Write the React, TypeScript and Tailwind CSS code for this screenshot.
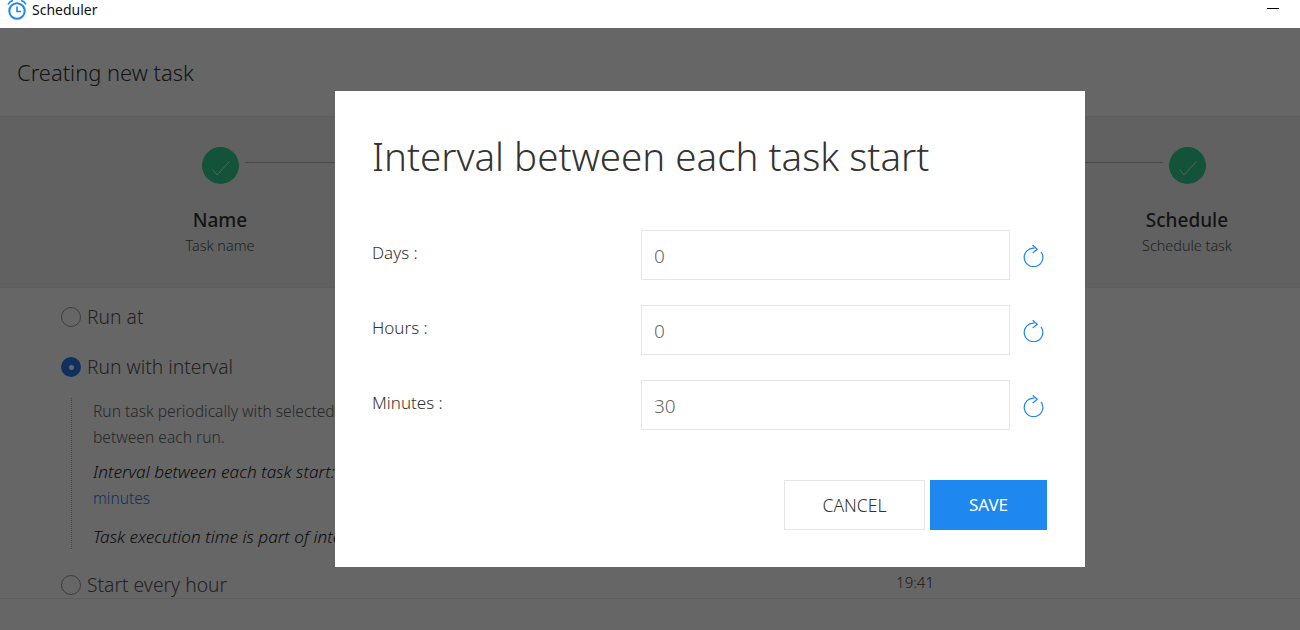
import { ReactNode } from "react";

const font = { fontFamily: '"Noto Sans", "Liberation Sans", sans-serif' };

function AppIcon() {
  return (
    <svg className="w-[20px] h-[20px]" viewBox="0 0 20 20" fill="none" stroke="#1e88f0" strokeWidth={2}>
      <circle cx="10" cy="11" r="7.7" />
      <path d="M10 6.5V11.5H14" strokeWidth={1.6} />
      <path d="M1 4.5C2 2.5 3.5 1 6 0.5M19 4.5C18 2.5 16.5 1 14 0.5" strokeWidth={1.6} />
    </svg>
  );
}

function CheckCircle() {
  return (
    <div className="w-[37px] h-[37px] rounded-full bg-[#30d090] flex items-center justify-center">
      <svg width="20" height="20" viewBox="0 0 20 20" fill="none" stroke="#ffffff" strokeOpacity={0.8} strokeWidth={1}>
        <path d="M2.5 13.5L7 19L19.5 5.5" />
      </svg>
    </div>
  );
}

function Step({ title, sub }: { title: string; sub: string }) {
  return (
    <div className="w-[200px] flex flex-col items-center shrink-0 relative">
      <CheckCircle />
      <div className="mt-[23px] text-[19px] leading-[26px] font-medium text-[#333]">{title}</div>
      <div className="mt-px text-[14.4px] leading-[24px] font-light text-[#555]">{sub}</div>
    </div>
  );
}

function Radio({ checked, label, right }: { checked?: boolean; label: string; right?: string }) {
  return (
    <div className="flex items-center h-[30px]">
      {checked ? (
        <div className="w-[20px] h-[20px] rounded-full bg-[#2a78ee] flex items-center justify-center">
          <div className="w-[5px] h-[5px] rounded-full bg-white" />
        </div>
      ) : (
        <div className="w-[20px] h-[20px] rounded-full border border-[#999]" />
      )}
      <span className="ml-[6px] text-[19.3px] font-light text-[#555]">{label}</span>
      {right && <span className="ml-auto mr-[366px] mb-[5px] text-[15px] font-light text-[#444]">{right}</span>}
    </div>
  );
}

function RefreshIcon() {
  return (
    <svg width="22" height="24" viewBox="0 0 22 24" fill="none" stroke="#1e88f0" strokeWidth={1.2} className="ml-[12px] shrink-0">
      <path d="M19 8.8A9.3 9.3 0 1 1 12.5 5.1" />
      <path d="M10.7 2.3L15.3 6.3L10.7 10" />
    </svg>
  );
}

function Field({ label, value }: { label: string; value: string }) {
  return (
    <div className="flex h-[50px] mb-[25px]">
      <div className="w-[269px] pt-[10px] text-[17px] leading-[26px] font-light text-[#333]">{label}</div>
      <div className="flex items-center w-[369px] h-[50px] border border-[#e6e6e6] pl-[12px] pt-[3px] text-[19px] font-light text-[#666]">{value}</div>
      <div className="flex items-center">
        <RefreshIcon />
      </div>
    </div>
  );
}

function Para({ children, className }: { children: ReactNode; className?: string }) {
  return <p className={"leading-[26px] whitespace-nowrap " + (className ?? "")}>{children}</p>;
}

export default function App() {
  return (
    <div className="relative h-[630px] w-[1300px] overflow-hidden bg-white flex flex-col" style={font}>
      {/* title bar */}
      <div className="h-[28px] flex items-start pl-[7px] bg-white relative z-20 shrink-0">
        <AppIcon />
        <span className="ml-[5px] text-[14px] leading-[20px] text-[#111]">Scheduler</span>
        <div className="ml-auto mr-[21px] mt-[8px] w-[12px] h-px bg-black" />
      </div>

      {/* page */}
      <div className="h-[88px] flex items-center px-[17px] pt-[3px] text-[21.9px] font-light text-[#333] shrink-0">
        Creating new task
      </div>
      <div className="h-[172px] bg-[#f3f3f3] border-y border-[#ececec] shrink-0 flex pt-[30px] pl-[120px] pr-[13px]">
        <Step title="Name" sub="Task name" />
        <div className="flex-1 h-px bg-[#bbb] mt-[15px] -ml-[75px] -mr-[76px]" />
        <Step title="Schedule" sub="Schedule task" />
      </div>
      <div className="flex-1 pl-[61px] pt-[14px]">
        <Radio label="Run at" />
        <div className="mt-[20px]">
          <Radio checked label="Run with interval" />
        </div>
        <div className="ml-[10px] mt-[16px] h-[151px] border-l border-dotted border-[#aaa] pl-[21px] text-[#666]">
          <Para className="text-[15.6px] font-light">Run task periodically with selected<br />between each run.</Para>
          <Para className="mt-[9px] text-[17.2px] font-light italic text-[#222]">
            Interval between each task start:
            <br />
            <span className="not-italic text-[15.5px] text-[#2a78ee]">minutes</span>
          </Para>
          <Para className="mt-[13px] text-[17.2px] font-light italic text-[#222]">Task execution time is part of interval</Para>
        </div>
        <div className="mt-[21px]">
          <Radio label="Start every hour" right="19:41" />
        </div>
      </div>
      <div className="absolute left-0 right-0 top-[598px] h-px bg-[#eee]" />

      {/* dialog */}
      <div className="absolute inset-0 top-[28px] bg-black/60 z-10 flex items-start pl-[335px] pt-[63px]">
        <div className="w-[750px] h-[476px] bg-white pl-[37px] pr-[38px]">
          <h2 className="pt-[36px] h-[139px] text-[38.5px] font-light leading-[58px] text-[#333]">Interval between each task start</h2>
          <Field label="Days :" value="0" />
          <Field label="Hours :" value="0" />
          <Field label="Minutes :" value="30" />
          <div className="flex justify-end gap-[5px] mt-[50px]">
            <button className="w-[141px] h-[50px] border border-[#e6e6e6] bg-white text-[17.5px] font-light text-[#333]">CANCEL</button>
            <button className="w-[117px] h-[50px] bg-[#1e88f0] text-[17px] text-white">SAVE</button>
          </div>
        </div>
      </div>
    </div>
  );
}
